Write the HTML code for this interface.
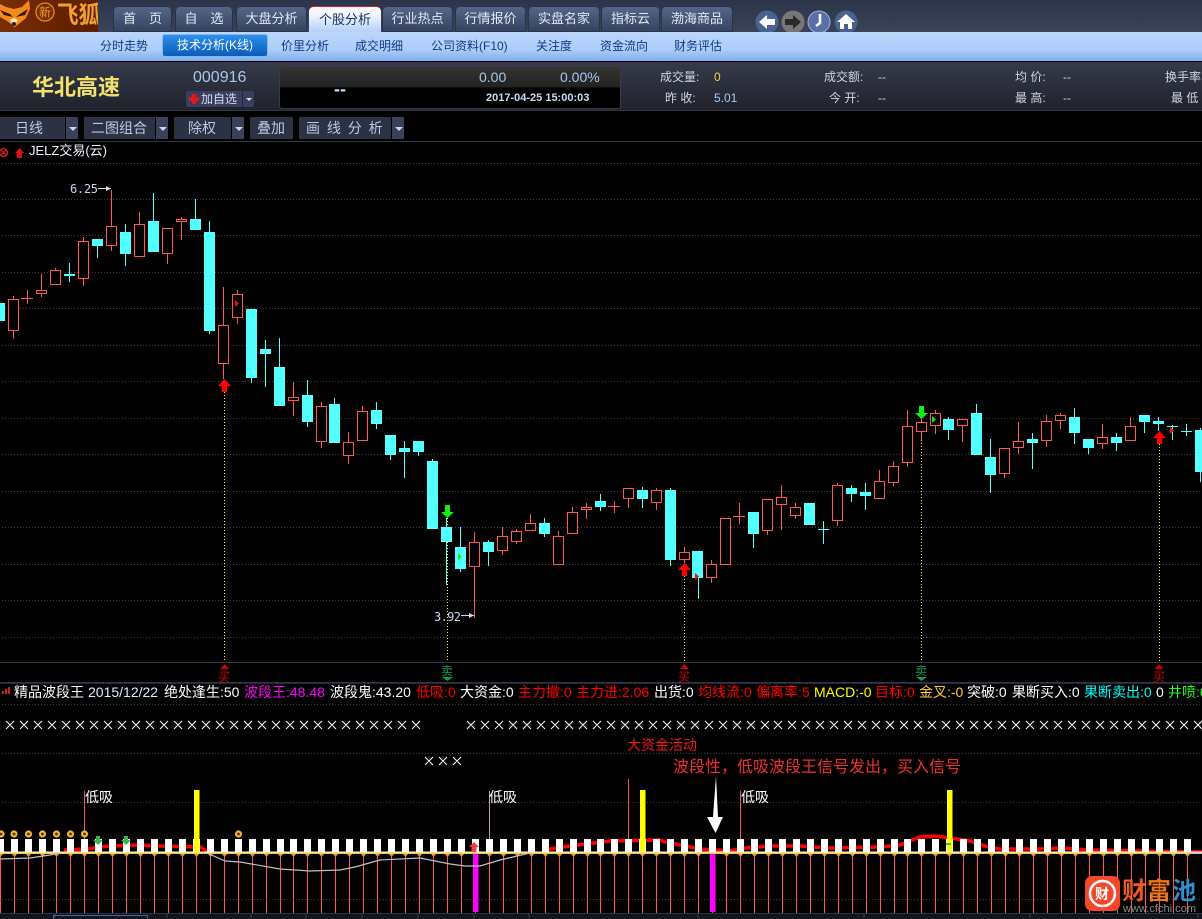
<!DOCTYPE html>
<html><head><meta charset="utf-8"><title>华北高速</title>
<style>
html,body{margin:0;padding:0;background:#000}
body{position:relative;width:1202px;height:919px;overflow:hidden;font-family:"Liberation Sans","WenQuanYi Zen Hei","Noto Sans CJK SC",sans-serif;}
div,span{position:absolute;white-space:nowrap}
.top{left:0;top:0;width:1202px;height:32px;background:linear-gradient(#2c3449,#3a4357)}
.logo{left:0;top:0;width:98px;height:32px;background:linear-gradient(90deg,#7a2e04,#662400 60%,#5c2000)}
.tab{top:6px;height:26px;line-height:26px;text-align:center;font-size:13px;color:#e2e8f2;background:linear-gradient(#56678a,#33425f);border-radius:5px 5px 0 0;box-shadow:inset 0 0 0 1px #2a3348}
.tab.on{top:6px;height:25px;color:#16305e;background:linear-gradient(#fff,#f2f6ff 30%,#b4cff8);border-top:1px solid #e02020;box-shadow:none}
.sub{left:0;top:32px;width:1202px;height:29px;background:linear-gradient(#bcd6fb,#aecdf9 60%,#7faeef)}
.sn{top:39px;font-size:12px;line-height:15px;color:#103a85}
.sb{left:163px;top:35px;width:104px;height:21px;background:linear-gradient(#2c8fee,#0a5cb8);border:0;border-radius:2px;box-shadow:0 0 0 1px #86b6ee;color:#fff;font-size:12px;line-height:21px;text-align:center}
.info{left:0;top:62px;width:1202px;height:48px;background:linear-gradient(#363a4a,#20222c)}
.lb{font-size:12px;line-height:14px;color:#cdd6e4}
.val{font-size:12px;line-height:14px;color:#cdd6e4}
.box{left:279px;top:66px;width:340px;height:41px;border:1px solid #3c3c3c;border-radius:3px;background:linear-gradient(#333 0,#222 50%,#000 50%,#000)}
.btn{top:117px;height:22px;line-height:22px;background:#2d3144;color:#b9cbe4;font-size:14px}
.ar{top:117px;height:22px;background:#3a3f5a}
.ar:after{content:"";position:absolute;left:3px;top:10px;border:4px solid transparent;border-top:4px solid #c8d8f0;border-bottom:0}
.it{top:684px;font-size:14px;line-height:17px;color:#fff}
.r{color:#f00}.m{color:#f0f}.y{color:#ff0}.c{color:#0ff}.g{color:#2f2}.o{color:#fc3}
</style></head>
<body>
<div class="top"></div>
<div class="logo"></div>
<svg style="position:absolute;left:0;top:0" width="98" height="32">
<path d="M0 4L6 7 14 9 22 7 29 0 30 9 26 18 15 27 7 21 0 17Z" fill="#f58a1c"/>
<path d="M0 10L10 14 13 17 4 15ZM28 9L20 14 16 17 25 15Z" fill="#3a1500"/>
<path d="M10 20L14 18 18 20 14 27Z" fill="#ffe6b0"/><circle cx="14" cy="24" r="2" fill="#222"/>
<circle cx="45" cy="12" r="9" fill="#7a2d05" stroke="#e08a20" stroke-width="1.3"/>
<text x="39" y="16.5" font-size="12" fill="#eea030" font-family="'Liberation Sans','WenQuanYi Zen Hei',sans-serif">新</text>
<text x="57" y="23" font-size="24" font-weight="bold" fill="#f0a030" font-family="'Liberation Sans','Noto Sans CJK SC',sans-serif" textLength="43" lengthAdjust="spacingAndGlyphs">飞狐</text>
</svg>
<div class="tab" style="left:113px;width:59px">首　页</div>
<div class="tab" style="left:175px;width:58px">自　选</div>
<div class="tab" style="left:236px;width:71px">大盘分析</div>
<div class="tab on" style="left:309px;width:72px">个股分析</div>
<div class="tab" style="left:382px;width:71px">行业热点</div>
<div class="tab" style="left:455px;width:71px">行情报价</div>
<div class="tab" style="left:528px;width:72px">实盘名家</div>
<div class="tab" style="left:601px;width:59px">指标云</div>
<div class="tab" style="left:661px;width:72px">渤海商品</div>
<svg style="position:absolute;left:750px;top:4px" width="112" height="32">
<circle cx="17" cy="18" r="11.500" fill="#4a628f"/><path d="M9 18L17 11V15H25V21H17V25Z" fill="#fff"/>
<circle cx="43" cy="18" r="11.500" fill="#77777a"/><path d="M51 18L43 11V15H35V21H43V25Z" fill="#2a2a2a"/>
<circle cx="69" cy="18" r="11" fill="#5a70a4" stroke="#9ab0dc"/><path d="M70 10V19L66 22" fill="none" stroke="#fff" stroke-width="2.500"/>
<circle cx="96" cy="18" r="11.500" fill="#4a628f"/><path d="M96 10L105 18H102V25H98V20H94V25H90V18H87Z" fill="#fff"/>
</svg>
<div class="sub"></div>
<div class="sn" style="left:100px">分时走势</div>
<div class="sb">技术分析(K线)</div>
<div class="sn" style="left:281px">价里分析</div>
<div class="sn" style="left:355px">成交明细</div>
<div class="sn" style="left:431px">公司资料(F10)</div>
<div class="sn" style="left:536px">关注度</div>
<div class="sn" style="left:600px">资金流向</div>
<div class="sn" style="left:674px">财务评估</div>
<div class="info"></div>
<div style="left:32px;top:74px;font-size:22px;line-height:28px;font-weight:bold;color:#f0e26a;font-family:'Liberation Sans','Noto Sans CJK SC',sans-serif">华北高速</div>
<div style="left:193px;top:69px;font-size:16px;line-height:18px;color:#a8c8ee">000916</div>
<div style="left:186px;top:91px;width:68px;height:16px;background:#3a3e5c;border-radius:2px"></div>
<svg style="position:absolute;left:189px;top:94px" width="10" height="10"><path d="M3 0h4v3h3v4H7v3H3V7H0V3h3z" fill="#e01818"/></svg>
<div style="left:201px;top:91px;font-size:12px;line-height:16px;color:#d5ddf0">加自选</div>
<div style="left:242px;top:91px;width:1px;height:16px;background:#20233a"></div>
<div style="left:246px;top:98px;border:3px solid transparent;border-top:3px solid #d8e0f0;border-bottom:0"></div>
<div class="box"></div>
<div style="left:334px;top:80px;font-size:18px;line-height:18px;font-weight:bold;color:#bcdcff">--</div>
<div style="left:479px;top:69px;font-size:14px;line-height:16px;color:#a8c8ee">0.00</div>
<div style="left:560px;top:69px;font-size:14px;line-height:16px;color:#a8c8ee">0.00%</div>
<div style="left:486px;top:92px;font-size:11px;line-height:13px;font-weight:bold;color:#c8dcf4">2017-04-25 15:00:03</div>
<div class="lb" style="left:660px;top:70px">成交量:</div><div class="val" style="left:714px;top:70px;color:#e6d840">0</div>
<div class="lb" style="left:824px;top:70px">成交额:</div><div class="val" style="left:878px;top:70px">--</div>
<div class="lb" style="left:1015px;top:70px">均 价:</div><div class="val" style="left:1063px;top:70px">--</div>
<div class="lb" style="left:1165px;top:70px">换手率</div>
<div class="lb" style="left:665px;top:91px">昨 收:</div><div class="val" style="left:714px;top:91px;color:#a8c8ee">5.01</div>
<div class="lb" style="left:829px;top:91px">今 开:</div><div class="val" style="left:878px;top:91px">--</div>
<div class="lb" style="left:1015px;top:91px">最 高:</div><div class="val" style="left:1063px;top:91px">--</div>
<div class="lb" style="left:1171px;top:91px">最 低</div>
<div style="left:0;top:110px;width:1202px;height:1px;background:#33364a"></div>
<div class="btn" style="left:0;width:50px;padding-left:15px">日线</div><div class="ar" style="left:66px;width:12px"></div>
<div class="btn" style="left:84px;width:64px;padding-left:7px">二图组合</div><div class="ar" style="left:156px;width:12px"></div>
<div class="btn" style="left:174px;width:43px;padding-left:14px">除权</div><div class="ar" style="left:232px;width:12px"></div>
<div class="btn" style="left:250px;width:36px;padding-left:7px">叠加</div>
<div class="btn" style="left:299px;width:85px;padding-left:7px;word-spacing:3px">画 线 分 析</div><div class="ar" style="left:392px;width:12px"></div>
<div style="left:0;top:141px;width:1202px;height:1px;background:#33364a"></div>
<div style="left:29px;top:143px;font-size:13px;line-height:16px;color:#f0f4ff">JELZ交易(云)</div>

<svg style="position:absolute;left:0;top:0" width="1202" height="919" font-family="'Liberation Sans','WenQuanYi Zen Hei','Noto Sans CJK SC',sans-serif">
<circle cx="3.500" cy="152.500" r="4" fill="none" stroke="#e02020" stroke-width="1.300"/><path d="M1 150l5 5m0-5l-5 5" stroke="#e02020"/>
<path d="M19.500 148L24 153H22V158H17V153H15Z" fill="#e01010"/>
<path d="M2 163.500H1202M2 199.500H1202M2 235.500H1202M2 272.500H1202M2 308.500H1202M2 345.500H1202M2 381.500H1202M2 418.500H1202M2 454.500H1202M2 491.500H1202M2 527.500H1202M2 564.500H1202M2 600.500H1202M2 637.500H1202" stroke="#3f3f44" stroke-dasharray="1 2" fill="none"/>
<path d="M0 662.500H1202M0 682.500H1202" stroke="#32344a" fill="none"/>
<path d="M0 683.500H1202" stroke="#25273a" fill="none"/>
<path d="M224.500 392V662M447.500 518V662M684.500 576V662M921.500 419V662M1159.500 444V662" stroke="#ffff40" stroke-dasharray="1 2" fill="none"/>
<path stroke="#ff5555" fill="none" d="M13.500 296V339M27.500 290V304M41.500 274V297M55.500 268V285M83.500 237V286M111.500 190V251M139.500 212V257M167.500 228V264M181.500 217V240M223.500 287V379M237.500 290V324M293.500 382V416M321.500 402V448M348.500 432V464M362.500 406V441M474.500 532V618M502.500 527V555M516.500 529V544M530.500 514V531M558.500 531V565M572.500 507V534M586.500 503V519M614.500 501V513M628.500 488V508M656.500 488V510M684.500 547V563M711.500 560V583M725.500 518V565M739.500 503V524M767.500 499V535M781.500 485V530M795.500 503V519M837.500 483V526M879.500 470V499M893.500 461V486M907.500 410V467M921.500 418V440M935.500 410V434M962.500 419V442M1004.500 448V478M1018.500 422V454M1046.500 415V447M1060.500 413V429M1102.500 424V449M1130.500 417V441M21 298.500H33M608 506.500H620M733 516.500H745"/>
<path stroke="#ff5555" fill="#000" d="M8.500 299.500h10v31h-10zM36.500 290.500h10v3h-10zM50.500 270.500h10v14h-10zM78.500 241.500h10v37h-10zM106.500 226.500h10v19h-10zM134.500 224.500h10v32h-10zM162.500 228.500h10v25h-10zM176.500 219.500h10v2h-10zM218.500 325.500h10v38h-10zM232.500 294.500h10v23h-10zM288.500 397.500h10v3h-10zM316.500 406.500h10v35h-10zM343.500 442.500h10v13h-10zM357.500 411.500h10v29h-10zM469.500 542.500h10v24h-10zM497.500 536.500h10v14h-10zM511.500 531.500h10v10h-10zM525.500 523.500h10v7h-10zM553.500 536.500h10v28h-10zM567.500 512.500h10v21h-10zM581.500 507.500h10v2h-10zM623.500 488.500h10v10h-10zM651.500 490.500h10v12h-10zM679.500 552.500h10v7h-10zM706.500 564.500h10v13h-10zM720.500 518.500h10v46h-10zM762.500 499.500h10v31h-10zM776.500 497.500h10v7h-10zM790.500 507.500h10v8h-10zM832.500 485.500h10v35h-10zM874.500 481.500h10v17h-10zM888.500 466.500h10v16h-10zM902.500 426.500h10v36h-10zM916.500 422.500h10v9h-10zM930.500 413.500h10v12h-10zM957.500 419.500h10v6h-10zM999.500 448.500h10v25h-10zM1013.500 441.500h10v6h-10zM1041.500 421.500h10v19h-10zM1055.500 415.500h10v5h-10zM1097.500 437.500h10v6h-10zM1125.500 426.500h10v14h-10z"/>
<path stroke="#54ffff" fill="none" d="M-.5 303V332M69.500 263V282M97.500 239V258M125.500 224V266M153.500 193V252M195.500 199V230M209.500 221V334M251.500 309V383M265.500 340V387M279.500 338V406M307.500 380V427M334.500 398V443M376.500 402V429M390.500 435V460M404.500 441V478M418.500 441V456M432.500 459V529M446.500 518V585M460.500 527V572M488.500 540V566M544.500 518V537M600.500 494V511M642.500 487V508M670.500 488V566M698.500 551V599M753.500 512V548M809.500 503V525M823.500 521V544M851.500 485V502M865.500 483V510M948.500 417V440M976.500 404V455M990.500 439V493M1032.500 433V469M1074.500 408V444M1088.500 439V454M1116.500 433V451M1144.500 415V433M1158.500 417V431M1172.500 425V440M1186.500 424V436M1200.500 428V482M818 529.500H829M1167 426.500H1178M1181 431.500H1192"/>
<path fill="#54ffff" d="M-6 303h11v18h-11zM64 274h11v2h-11zM92 239h11v7h-11zM120 232h11v22h-11zM148 221h11v31h-11zM190 219h11v11h-11zM204 232h11v99h-11zM246 309h11v69h-11zM260 349h11v5h-11zM274 367h11v39h-11zM302 395h11v27h-11zM329 404h11v39h-11zM371 410h11v14h-11zM385 435h11v20h-11zM399 448h11v4h-11zM413 441h11v11h-11zM427 461h11v68h-11zM441 527h11v15h-11zM455 547h11v22h-11zM483 542h11v10h-11zM539 523h11v11h-11zM595 501h11v6h-11zM637 490h11v9h-11zM665 490h11v70h-11zM692 551h11v27h-11zM748 512h11v22h-11zM804 503h11v22h-11zM846 488h11v6h-11zM860 492h11v4h-11zM943 419h11v11h-11zM971 413h11v42h-11zM985 457h11v18h-11zM1027 439h11v4h-11zM1069 417h11v16h-11zM1083 439h11v9h-11zM1111 437h11v6h-11zM1139 415h11v7h-11zM1153 421h11v3h-11zM1195 430h11v42h-11z"/>
<path d="M235 300L239 303.500 235 307ZM695 573L699 576.500 695 580ZM1170 427L1174 430.500 1170 434Z" fill="#f01010"/>
<path d="M458 553L462 556.500 458 560ZM932 416L936 419.500 932 423Z" fill="#10f010"/>
<path d="M224.500 379L231 386H227V392H222V386H218ZM684.500 563L691 570H687V576H682V570H678ZM1159.500 431L1166 438H1162V444H1157V438H1153Z" fill="#f00"/>
<path d="M445 505H450V512H454L447.500 518 441 512H445ZM919 406H924V413H928L921.500 419 915 413H919Z" fill="#10f010"/>
<text x="70" y="193" font-size="12" fill="#c8d4f0" font-family="'DejaVu Sans Mono','Liberation Mono',monospace" textLength="28" lengthAdjust="spacing">6.25</text>
<path d="M98 188.500H111" stroke="#d0dcf0"/><path d="M106 186L111 188.500 106 191Z" fill="#d0dcf0"/>
<text x="434" y="621" font-size="12" fill="#c8d4f0" font-family="'DejaVu Sans Mono','Liberation Mono',monospace" textLength="27" lengthAdjust="spacing">3.92</text>
<path d="M461 615.500H474" stroke="#d0dcf0"/><path d="M469 613L474 615.500 469 618Z" fill="#d0dcf0"/>
<g fill="#d00000" font-size="12">
<path d="M224.500 664L229 669H220ZM684.500 664L689 669H680ZM1159 664L1163.500 669H1154.500Z"/>
<text x="218" y="681">买</text><text x="678" y="681">买</text><text x="1153" y="681">买</text>
</g>
<g fill="#159a55" font-size="12">
<path d="M442 677H453L447.500 681ZM916 677H927L921.500 681Z"/>
<text x="441" y="675">卖</text><text x="915" y="675">卖</text>
</g>
<path d="M2 704.500H1202M2 753.500H1202M2 802.500H1202M2 899.500H1202" stroke="#3f3f44" stroke-dasharray="1 2" fill="none"/>
<path stroke="#fff" fill="none" d="M-8 721l8 8m0-8l-8 8m14-8l8 8m0-8l-8 8m14-8l8 8m0-8l-8 8m14-8l8 8m0-8l-8 8m14-8l8 8m0-8l-8 8m14-8l8 8m0-8l-8 8m14-8l8 8m0-8l-8 8m14-8l8 8m0-8l-8 8m14-8l8 8m0-8l-8 8m14-8l8 8m0-8l-8 8m14-8l8 8m0-8l-8 8m14-8l8 8m0-8l-8 8m14-8l8 8m0-8l-8 8m14-8l8 8m0-8l-8 8m14-8l8 8m0-8l-8 8m14-8l8 8m0-8l-8 8m14-8l8 8m0-8l-8 8m14-8l8 8m0-8l-8 8m14-8l8 8m0-8l-8 8m14-8l8 8m0-8l-8 8m14-8l8 8m0-8l-8 8m14-8l8 8m0-8l-8 8m14-8l8 8m0-8l-8 8m14-8l8 8m0-8l-8 8m14-8l8 8m0-8l-8 8m14-8l8 8m0-8l-8 8m14-8l8 8m0-8l-8 8m14-8l8 8m0-8l-8 8m14-8l8 8m0-8l-8 8m14-8l8 8m0-8l-8 8m14-8l8 8m0-8l-8 8"/>
<path stroke="#fff" fill="none" d="M467 721l8 8m0-8l-8 8m14-8l8 8m0-8l-8 8m14-8l8 8m0-8l-8 8m14-8l8 8m0-8l-8 8m14-8l8 8m0-8l-8 8m14-8l8 8m0-8l-8 8m14-8l8 8m0-8l-8 8m14-8l8 8m0-8l-8 8m14-8l8 8m0-8l-8 8m14-8l8 8m0-8l-8 8m14-8l8 8m0-8l-8 8m14-8l8 8m0-8l-8 8m14-8l8 8m0-8l-8 8m14-8l8 8m0-8l-8 8m14-8l8 8m0-8l-8 8m14-8l8 8m0-8l-8 8m14-8l8 8m0-8l-8 8m14-8l8 8m0-8l-8 8m14-8l8 8m0-8l-8 8m14-8l8 8m0-8l-8 8m14-8l8 8m0-8l-8 8m14-8l8 8m0-8l-8 8m13-8l8 8m0-8l-8 8m14-8l8 8m0-8l-8 8m14-8l8 8m0-8l-8 8m14-8l8 8m0-8l-8 8m14-8l8 8m0-8l-8 8m14-8l8 8m0-8l-8 8m14-8l8 8m0-8l-8 8m14-8l8 8m0-8l-8 8m14-8l8 8m0-8l-8 8m14-8l8 8m0-8l-8 8m14-8l8 8m0-8l-8 8m14-8l8 8m0-8l-8 8m14-8l8 8m0-8l-8 8m14-8l8 8m0-8l-8 8m14-8l8 8m0-8l-8 8m14-8l8 8m0-8l-8 8m14-8l8 8m0-8l-8 8m14-8l8 8m0-8l-8 8m14-8l8 8m0-8l-8 8m14-8l8 8m0-8l-8 8m14-8l8 8m0-8l-8 8m14-8l8 8m0-8l-8 8m14-8l8 8m0-8l-8 8m14-8l8 8m0-8l-8 8m14-8l8 8m0-8l-8 8m14-8l8 8m0-8l-8 8m14-8l8 8m0-8l-8 8m14-8l8 8m0-8l-8 8m14-8l8 8m0-8l-8 8m14-8l8 8m0-8l-8 8m14-8l8 8m0-8l-8 8"/>
<path stroke="#fff" fill="none" d="M425 757l8 8m0-8l-8 8m14-8l8 8m0-8l-8 8m14-8l8 8m0-8l-8 8"/>
<path d="M64 850L85 849 110 846 140 845 160 846 200 847 207 851M543 850L570 846 610 841 660 840 665 842 680 845 700 849 730 851 745 848 770 846 800 846 830 848 880 847 900 845 920 837 935 836 950 838 970 841 985 846 1000 849 1040 849 1060 848 1090 850 1202 852" fill="none" stroke="#f00" stroke-width="3.500"/>
<path d="M84.500 791V839M628.500 779V839M740.500 791V839" stroke="#f05050" fill="none"/>
<path d="M489.500 791V839" stroke="#c0a0a0" fill="none"/>
<path fill="#fff" d="M-3 839h7v13h-7z
m14 0h7v13h-7zm14 0h7v13h-7zm14 0h7v13h-7zm14 0h7v13h-7zm14 0h7v13h-7zm14 0h7v13h-7zm14 0h7v13h-7z
m14 0h7v13h-7zm14 0h7v13h-7zm14 0h7v13h-7zm14 0h7v13h-7zm14 0h7v13h-7zm14 0h7v13h-7zm14 0h7v13h-7z
m14 0h7v13h-7zm14 0h7v13h-7zm14 0h7v13h-7zm14 0h7v13h-7zm14 0h7v13h-7zm14 0h7v13h-7z
m13 0h7v13h-7z
m14 0h7v13h-7zm14 0h7v13h-7zm14 0h7v13h-7zm14 0h7v13h-7zm14 0h7v13h-7zm14 0h7v13h-7zm14 0h7v13h-7z
m14 0h7v13h-7zm14 0h7v13h-7zm14 0h7v13h-7zm14 0h7v13h-7zm14 0h7v13h-7zm14 0h7v13h-7zm14 0h7v13h-7z
m14 0h7v13h-7zm14 0h7v13h-7zm14 0h7v13h-7zm14 0h7v13h-7zm14 0h7v13h-7zm14 0h7v13h-7zm14 0h7v13h-7z
m13 0h7v13h-7z
m14 0h7v13h-7zm14 0h7v13h-7zm14 0h7v13h-7zm14 0h7v13h-7zm14 0h7v13h-7zm14 0h7v13h-7zm14 0h7v13h-7z
m14 0h7v13h-7zm14 0h7v13h-7zm14 0h7v13h-7zm14 0h7v13h-7zm14 0h7v13h-7zm14 0h7v13h-7zm14 0h7v13h-7z
m14 0h7v13h-7zm14 0h7v13h-7zm14 0h7v13h-7zm14 0h7v13h-7zm14 0h7v13h-7zm14 0h7v13h-7zm14 0h7v13h-7z
m13 0h7v13h-7z
m14 0h7v13h-7zm14 0h7v13h-7zm14 0h7v13h-7zm14 0h7v13h-7zm14 0h7v13h-7zm14 0h7v13h-7zm14 0h7v13h-7z
m14 0h7v13h-7zm14 0h7v13h-7zm14 0h7v13h-7zm14 0h7v13h-7zm14 0h7v13h-7zm14 0h7v13h-7zm14 0h7v13h-7z
m14 0h7v13h-7zm14 0h7v13h-7zm14 0h7v13h-7zm14 0h7v13h-7zm14 0h7v13h-7zm14 0h7v13h-7z"/>
<path d="M194 790h5.500v62H194zM640 790h5.500v62H640zM947 790h5.500v62H947z" fill="#ff0"/>
<rect x="0" y="851.500" width="1202" height="1" fill="#fff"/><rect x="0" y="852.500" width="1202" height="1.500" fill="#f4cc40"/>
<path fill="none" stroke="#ff5555" d="M.5 854v59
m14-59v59m14-59v59m14-59v59m14-59v59m14-59v59m14-59v59m14-59v59
m14-59v59m14-59v59m14-59v59m14-59v59m14-59v59m14-59v59m14-59v59
m14-59v59m14-59v59m14-59v59m14-59v59m14-59v59m14-59v59
m13-59v59
m14-59v59m14-59v59m14-59v59m14-59v59m14-59v59m14-59v59m14-59v59
m14-59v59m14-59v59m14-59v59m14-59v59m14-59v59m14-59v59m14-59v59
m14-59v59m14-59v59m14-59v59m14-59v59m14-59v59m14-59v59m14-59v59
m13-59v59
m14-59v59m14-59v59m14-59v59m14-59v59m14-59v59m14-59v59m14-59v59
m14-59v59m14-59v59m14-59v59m14-59v59m14-59v59m14-59v59m14-59v59
m14-59v59m14-59v59m14-59v59m14-59v59m14-59v59m14-59v59m14-59v59
m13-59v59
m14-59v59m14-59v59m14-59v59m14-59v59m14-59v59m14-59v59m14-59v59
m14-59v59m14-59v59m14-59v59m14-59v59m14-59v59m14-59v59m14-59v59
m14-59v59m14-59v59m14-59v59m14-59v59m14-59v59m14-59v59"/>
<path fill="#e8a020" d="M-2 854h5l-2.500 3z
m14 0h5l-2.500 3zm14 0h5l-2.500 3zm14 0h5l-2.500 3zm14 0h5l-2.500 3zm14 0h5l-2.500 3zm14 0h5l-2.500 3zm14 0h5l-2.500 3z
m14 0h5l-2.500 3zm14 0h5l-2.500 3zm14 0h5l-2.500 3zm14 0h5l-2.500 3zm14 0h5l-2.500 3zm14 0h5l-2.500 3zm14 0h5l-2.500 3z
m14 0h5l-2.500 3zm14 0h5l-2.500 3zm14 0h5l-2.500 3zm14 0h5l-2.500 3zm14 0h5l-2.500 3zm14 0h5l-2.500 3z
m13 0h5l-2.500 3z
m14 0h5l-2.500 3zm14 0h5l-2.500 3zm14 0h5l-2.500 3zm14 0h5l-2.500 3zm14 0h5l-2.500 3zm14 0h5l-2.500 3zm14 0h5l-2.500 3z
m14 0h5l-2.500 3zm14 0h5l-2.500 3zm14 0h5l-2.500 3zm14 0h5l-2.500 3zm14 0h5l-2.500 3zm14 0h5l-2.500 3zm14 0h5l-2.500 3z
m14 0h5l-2.500 3zm14 0h5l-2.500 3zm14 0h5l-2.500 3zm14 0h5l-2.500 3zm14 0h5l-2.500 3zm14 0h5l-2.500 3zm14 0h5l-2.500 3z
m13 0h5l-2.500 3z
m14 0h5l-2.500 3zm14 0h5l-2.500 3zm14 0h5l-2.500 3zm14 0h5l-2.500 3zm14 0h5l-2.500 3zm14 0h5l-2.500 3zm14 0h5l-2.500 3z
m14 0h5l-2.500 3zm14 0h5l-2.500 3zm14 0h5l-2.500 3zm14 0h5l-2.500 3zm14 0h5l-2.500 3zm14 0h5l-2.500 3zm14 0h5l-2.500 3z
m14 0h5l-2.500 3zm14 0h5l-2.500 3zm14 0h5l-2.500 3zm14 0h5l-2.500 3zm14 0h5l-2.500 3zm14 0h5l-2.500 3zm14 0h5l-2.500 3z
m13 0h5l-2.500 3z
m14 0h5l-2.500 3zm14 0h5l-2.500 3zm14 0h5l-2.500 3zm14 0h5l-2.500 3zm14 0h5l-2.500 3zm14 0h5l-2.500 3zm14 0h5l-2.500 3z
m14 0h5l-2.500 3zm14 0h5l-2.500 3zm14 0h5l-2.500 3zm14 0h5l-2.500 3zm14 0h5l-2.500 3zm14 0h5l-2.500 3zm14 0h5l-2.500 3z
m14 0h5l-2.500 3zm14 0h5l-2.500 3zm14 0h5l-2.500 3zm14 0h5l-2.500 3zm14 0h5l-2.500 3zm14 0h5l-2.500 3z"/>
<path d="M473 854h5.500v58H473zM710 854h5.500v58H710z" fill="#f0f"/>
<path d="M0 859L30 858 50 855 60 853M207 853L225 861 240 862 280 869 310 871 340 870 355 867 380 860 420 858 450 864 465 866 480 866 500 860 530 853M1190 853L1202 853" fill="none" stroke="#c0c0c0" stroke-width="1.200"/>
<g fill="#4a3000" stroke="#f2b730" stroke-width="2.200">
<circle cx="1" cy="834" r="2.500"/><circle cx="14" cy="834" r="2.500"/><circle cx="28.500" cy="834" r="2.500"/><circle cx="42.500" cy="834" r="2.500"/><circle cx="56.500" cy="834" r="2.500"/><circle cx="70.500" cy="834" r="2.500"/><circle cx="84.500" cy="834" r="2.500"/><circle cx="238.500" cy="834" r="2.500"/>
</g>
<path d="M98 845L103 840H100V836H96V840H93ZM126 845L131 840H128V836H124V840H121Z" fill="#3cb24c"/>
<path d="M474 842L479 847H476.500V852H471.500V847H469Z" fill="#f04040"/>
<path d="M946 843h5v2h-5z" fill="#30c040"/>
<path d="M716 776L718 817H723L715.500 833 707 817H713Z" fill="#fff"/>
<text x="85" y="802" font-size="14" fill="#fff">低吸</text>
<text x="489" y="802" font-size="14" fill="#fff">低吸</text>
<text x="741" y="802" font-size="14" fill="#fff">低吸</text>
<text x="627" y="750" font-size="14" fill="#f01818">大资金活动</text>
<text x="673" y="772" font-size="16" fill="#f03030">波段性，低吸波段王信号发出，买入信号</text>
<rect x="0" y="914" width="1202" height="5" fill="#14161f"/>
<path d="M0 913.500H1202" stroke="#2e3244"/>
<path d="M55 914v4M167 914v4M251 914v4M306 914v4M362 914v4M418 914v4M474 914v4M529 914v4M698 914v4M864 914v4M1030 914v4M1198 914v4" stroke="#3a3e50"/>
<path d="M53.500 918.500V915.500H147.500V918.500" fill="none" stroke="#3d6ab0"/>
<path d="M2 694h2v-3H2zM5 694h2v-5H5zM8 694h2v-7H8z" fill="#d02020"/>
<rect x="1085" y="876" width="35" height="35" rx="7" fill="#f4482a"/>
<circle cx="1102.500" cy="893.500" r="12.500" fill="none" stroke="#fff" stroke-width="2.500"/>
<text x="1095" y="899" font-size="14" fill="#fff" font-weight="bold">财</text>
<text x="1122" y="899" font-size="24" font-weight="bold" fill="#ee5a25" font-family="'Liberation Sans','Noto Sans CJK SC',sans-serif">财</text>
<text x="1147" y="899" font-size="24" font-weight="bold" fill="#f0761c" font-family="'Liberation Sans','Noto Sans CJK SC',sans-serif">富</text>
<text x="1172" y="899" font-size="24" font-weight="bold" fill="#2f8fd0" font-family="'Liberation Sans','Noto Sans CJK SC',sans-serif">池</text>
<text x="1123" y="912" font-size="11" fill="#8c8c8c" textLength="73">www.cfchi.com</text>
</svg>

<div class="it" style="left:14px">精品波段王</div>
<div class="it" style="left:88px;color:#dfeaff">2015/12/22</div>
<div class="it" style="left:164px">绝处逢生:50</div>
<div class="it m" style="left:244px">波段王:48.48</div>
<div class="it" style="left:330px">波段鬼:43.20</div>
<div class="it r" style="left:416px">低吸:0</div>
<div class="it" style="left:460px">大资金:0</div>
<div class="it r" style="left:518px">主力撤:0</div>
<div class="it r" style="left:576px">主力进:2.06</div>
<div class="it" style="left:654px">出货:0</div>
<div class="it r" style="left:698px">均线流:0</div>
<div class="it r" style="left:756px">偏离率:5</div>
<div class="it y" style="left:814px">MACD:-0</div>
<div class="it r" style="left:875px">目标:0</div>
<div class="it o" style="left:919px">金叉:-0</div>
<div class="it" style="left:967px">突破:0</div>
<div class="it" style="left:1012px">果断买入:0</div>
<div class="it c" style="left:1084px">果断卖出:0</div>
<div class="it" style="left:1156px">0</div>
<div class="it g" style="left:1168px">井喷:0</div>
</body></html>
